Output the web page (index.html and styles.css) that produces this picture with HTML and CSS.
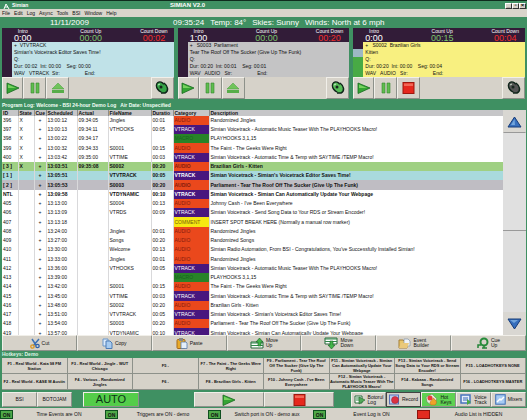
FILE: index.html
```
<!DOCTYPE html>
<html lang="en">
<head>
<meta charset="utf-8">
<title>Simian</title>
<link rel="stylesheet" href="styles.css">
</head>
<body>
<div class="app" id="app"></div>
<script src="app.js"></script>
</body>
</html>
```

FILE: styles.css
```
* { box-sizing: border-box; }
body { margin: 0; background: #3f9062; font: 5px/7px "Liberation Sans", sans-serif; color: #111; }
button { font: inherit; color: inherit; margin: 0; padding: 0; border: 1px solid; border-color: #f1efe9 #8d918a #8d918a #f1efe9; background: #d6d2c9; display: flex; align-items: center; justify-content: center; gap: 2px; min-width: 0; }
svg { display: block; flex: none; }
p, h1, h2 { margin: 0; font-size: inherit; font-weight: inherit; }
.app { min-height: 100vh; display: flex; flex-direction: column; }

.title { display: grid; grid-template-columns: 167px 1fr auto; align-items: center; height: 9px; padding: 1px 1px 0 3px; border-top: 1px solid #0f2c1d; color: #fff; font-size: 6px; font-weight: bold; }
.brand { display: flex; gap: 2px; align-items: center; font-size: 5px; }
.window-buttons { display: flex; justify-content: flex-end; }
.window-buttons button { width: 7px; height: 6px; border-color: #fff #333 #333 #fff; color: #000; }
.menu { display: flex; align-items: center; gap: 4px; height: 8px; padding: 0 2px; background: #d9d5cb; }
.menu a { color: inherit; text-decoration: none; }
.info { display: flex; align-items: center; height: 11px; padding-left: 50px; color: #fff; font-size: 8px; line-height: 10px; white-space: pre; }
.info .date { flex: 0 0 123px; }
.info .weather { display: flex; gap: 6px; }

.decks { display: grid; grid-template-columns: repeat(3, 1fr); gap: 4px; padding: 0 2px; }
.counters { display: grid; grid-template-columns: 1fr 1fr 1fr; height: 14px; padding: 1px 6px 0 12px; background: #321c38; color: #fff; }
.counters div { display: flex; flex-direction: column; line-height: 5px; text-align: center; justify-self: start; }
.counters b { font: 9px/8px "Liberation Sans", sans-serif; }
.counters .up { justify-self: center; }
.counters .down { justify-self: end; }
.up b { color: #7bc46c; }
.down b { color: #f02d2a; }
.now { display: flex; height: 35px; }
.meter { flex: 0 0 10px; background: #321c38; }
.meter.live { background: linear-gradient(#321c38 7px, #9db8c4 7px 15px, #48aa45 15px); }
.details { flex: 1; padding-left: 2px; white-space: pre; overflow: hidden; }
.blue .details { background: #c0e2e8; }
.gray .details { background: #c4c4c5; }
.yellow .details { background: #f8f080; }
.deck-buttons { display: grid; grid-template-columns: 21px 23px 23px 1fr 23px; height: 22px; background: #d6d2c9; }

.log { padding: 3px 0 0 2px; }
.log h2 { color: #f2fff5; font-weight: bold; height: 8px; line-height: 7px; white-space: pre; }
.log-body { display: grid; grid-template-columns: 1fr 23px; height: 225px; padding-right: 1px; }
.log-view { overflow: hidden; background: #fff; }
table { width: 100%; table-layout: fixed; border-collapse: collapse; }
th, td { padding: 0 1px; text-align: left; white-space: nowrap; overflow: hidden; height: 9px; line-height: 7px; border-right: 1px solid #d9d9db; }
tr:nth-child(4n) td { height: 10px; }
thead th { height: 6px; line-height: 6px; background: #c6c6c8; border-right-color: #8c8c8c; }
td:nth-child(3) { text-align: center; }
th:last-child, td:last-child { border-right: 0; }
.c-id { width: 16px; } .c-state { width: 16px; } .c-cue { width: 12px; } .c-time { width: 31px; }
.c-file { width: 43px; } .c-duration { width: 22px; } .c-category { width: 36px; }
.AUDIO { background: #ea481c; color: #861b0c; }
.VTRACK { background: #48177e; color: #fff; }
.MACRO { background: #288328; color: #176320; }
.COMMENT { background: #f6e911; color: #75620c; }
.playing, .cued, .queued, .next { font-weight: bold; }
.playing { background: #9fd083; }
.cued { background: #a9dadd; }
.queued { background: #bfbdc3; }
.scroll { display: flex; flex-direction: column; background: #dedede; }
.scroll button { height: 23px; border-color: #d9d7d2 #d9d7d2 #999 #d9d7d2; background: #d9d7d2; }
.thumb { height: 98px; border-bottom: 1px solid #999; background: #e0e0e0; }
.scroll .scroll-down { margin-top: auto; border-color: #d9d7d2; }

.tools { display: grid; grid-template-columns: repeat(7, 1fr); height: 16px; padding: 0 1px 0 2px; }
.tools button, .modes button { text-align: left; line-height: 5px; }
.hotkeys { padding: 0 1px 0 2px; }
.hotkeys h2 { height: 7px; line-height: 7px; color: #dff5e4; font-weight: bold; }
.keys { display: grid; grid-template-columns: repeat(8, 1fr); grid-auto-rows: 16px; }
.keys button { font-size: 4px; font-weight: bold; line-height: 5px; text-align: center; border-width: 0 1px 1px 0; }
.transport { display: flex; height: 17px; padding: 2px 1px 0 2px; }
.source { flex: 0 0 35px; }
.transport .auto { flex: 0 0 56px; margin: 0 55px 0 11px; background: #54cd4a; font-size: 11px; line-height: 13px; color: #0b3515; }
.transport .wide { flex: 0 0 70px; }
.modes { flex: 1; margin-left: 17px; display: grid; grid-template-columns: repeat(5, 1fr); }
.modes .on { background: #5fd252; }
.modes .focus { border-color: #444; }
.status { flex: 1; display: grid; grid-template-columns: 105px 103px 105px 104px 1fr; align-items: center; margin-top: 1px; background: #d6d2c9; }
.status div { display: flex; align-items: center; }
.status span { flex: 1; text-align: center; }
.lamp { flex: 0 0 13px; height: 9px; line-height: 8px; text-align: center; border: 1px solid #0f4f20; background: #4fa848; font-weight: bold; font-style: normal; }
.lamp.off { background: #e22b20; border-color: #8c140e; }
```

FILE: app.js
```
const svg = (w, h, box, body) => `<svg width="${w}" height="${h}" viewBox="0 0 ${box}" aria-hidden="true">${body}</svg>`;
const icons = {
  play: svg(14, 12, '14 12', '<path d="M1 1 13 6 1 11.500Z" fill="#35a533" stroke="#176b20" stroke-width=".8"/><path d="M2 2.500 10 6H2Z" fill="#76d25f"/>'),
  pause: svg(10, 12, '10 12', '<path d="M1 1H4V11H1ZM6 1H9V11H6Z" fill="#5fbd4e" stroke="#36862f" stroke-width=".6"/>'),
  eject: svg(14, 12, '14 12', '<path d="M7 1 13 7H1Z" fill="#70c45b" stroke="#439a3b" stroke-width=".5"/><path d="M1 8H13V11H1Z" fill="#57ad49"/>'),
  stop: svg(13, 12, '13 12', '<rect x="1" y=".5" width="11" height="11" fill="#e5281d" stroke="#9d180f"/><path d="M2 1.500H11V4H2Z" fill="#f26856"/>'),
  up: svg(15, 12, '15 12', '<path d="M7.500 1 14 11H1Z" fill="#376fbd" stroke="#173c78"/><path d="M7.500 3 4 9H8Z" fill="#72a5dc"/>'),
  down: svg(15, 12, '15 12', '<path d="M7.500 11 14 1H1Z" fill="#376fbd" stroke="#173c78"/><path d="M3 2H11L7 5Z" fill="#72a5dc"/>'),
  logo: svg(7, 6, '7 6', '<path d="M1 6 3 1 6 6M2 4H5" fill="none" stroke="#fff"/>'),
  cut: svg(10, 11, '10 11', '<path d="M2 1 6 7M9 1 3 8" stroke="#3c70b4" stroke-width="1.500"/><circle cx="2.500" cy="8.500" r="1.700" fill="none" stroke="#de9922" stroke-width="1.300"/><circle cx="7.500" cy="8" r="1.700" fill="none" stroke="#2d60aa" stroke-width="1.300"/>'),
  copy: svg(11, 11, '11 11', '<path d="M1 1H6V8H1Z" fill="#dceafa" stroke="#6a96c8"/><path d="M4 3H8L10 5V10.500H4Z" fill="#a7cbf0" stroke="#4d7db5"/>'),
  paste: svg(12, 11, '12 11', '<rect x="1" y="1.500" width="8" height="9" rx="1" fill="#e8aa2a" stroke="#a66b19"/><path d="M3 0H7V3H3Z" fill="#888"/><path d="M5 4H10L11 5V10.500H5Z" fill="#e4effa" stroke="#587ba7" stroke-width=".8"/>'),
  moveUp: svg(14, 11, '14 11', '<path d="M1 4H13V10H1Z" fill="#fff" stroke="#27693b"/><path d="M1 5H13M1 7.500H13" stroke="#31884b"/><path d="M8 8V4H6L9.500 0 13 4H11V8Z" fill="#43b54a" stroke="#175e25" stroke-width=".6"/>'),
  moveDown: svg(14, 12, '14 12', '<path d="M1 1H13V7H1Z" fill="#fff" stroke="#27693b"/><path d="M1 2H13M1 4.500H13" stroke="#31884b"/><path d="M6 4V8H4L7.500 12 11 8H9V4Z" fill="#43b54a" stroke="#175e25" stroke-width=".6"/>'),
  folder: svg(13, 11, '13 11', '<path d="M1 2H5L6 3H9V10H1Z" fill="#e7c66d" stroke="#a57e37"/><path d="M6 1H10L12 3V8H6Z" fill="#eef3f8" stroke="#8194a8" stroke-width=".7"/><path d="M1 10 3 5H11L9 10Z" fill="#eac97b"/>'),
  cue: svg(12, 12, '12 12', '<circle cx="7" cy="5" r="3.500" fill="none" stroke="#268b3a" stroke-width="2"/><path d="M1 11V8H4M5 11H10M7 8V11" fill="none" stroke="#248437" stroke-width="1.500"/>'),
  log: svg(12, 11, '12 11', '<path d="M1 2H8V9H1Z" fill="#fff" stroke="#286e3c"/><path d="M2 4H7M2 6H7" stroke="#348e4c"/><path d="M5 3V10L11 6Z" fill="#52aa57" stroke="#22672d" stroke-width=".6"/>'),
  record: svg(11, 11, '11 11', '<rect x=".5" y="1" width="9" height="9" fill="#b8ceef" stroke="#5671b8"/><circle cx="6" cy="6" r="3.500" fill="#dc3242" stroke="#9b1c2c" stroke-width=".5"/>'),
  fire: svg(13, 12, '13 12', '<path d="M1 3 7 0 12 5 6 11 2 8Z" fill="#e2ebd9" stroke="#69835c" stroke-width=".6"/><circle cx="5" cy="4" r="2.500" fill="#e63b38"/><path d="M6 11C3 7 8 7 8 4 11 6 13 8 10 11Z" fill="#eea329" stroke="#b86421" stroke-width=".5"/>'),
  voice: svg(12, 11, '12 11', '<rect x="1" y="1" width="9" height="8" fill="#e7eefb" stroke="#4774bd" stroke-width="1.500"/><path d="M3 4H8M3 6H8" stroke="#3969b8"/><path d="M7 8V5L11 8 7 11Z" fill="#48aa45"/>'),
  mixer: svg(11, 11, '11 11', '<rect x=".7" y=".7" width="9.500" height="9.500" fill="#a6caf2" stroke="#3d6eb6"/><path d="M2 8 5 5 6 6 9 3" fill="none" stroke="#fff" stroke-width="1.500"/>')
};
const speaker = c => svg(14, 14, '14 14', `<ellipse cx="6" cy="6" rx="4" ry="5.500" transform="rotate(-35 6 6)" fill="${c}" stroke="#10251a" stroke-width="1.500"/><path d="M9 2C13 5 14 10 10 12L6 12" fill="${c}" stroke="#10251a" stroke-width="1.500"/><circle cx="6" cy="6" r="1.500" fill="#17271d"/><path d="M3 4 5 3" stroke="#c9e4ca"/>`);
const button = (icon, label, cls = '') => `<button class="${cls}" aria-label="${label}">${icon}</button>`;

const decks = [
  ['blue', '0:00', '00:00', '00:02', '+  VTVTRACK', "Simian's Voicetrack Editor Saves Time!", 'Dur: 00:02  Int: 00:00    Seg: 00:00', 'WAV   VTRACK  Str:                  End:', '#36a447'],
  ['gray', '1:00', '00:00', '00:20', '+   S0003  Parliament', 'Tear The Roof Off The Sucker (Give Up The Funk)', 'Dur: 00:20  Int: 00:01    Seg: 00:01', 'WAV   AUDIO   Str:                  End:', '#58bd58'],
  ['yellow', '0:00', '00:15', '00:04', '+   S0002  Brazilian Girls', 'Kitten', 'Dur: 00:20  Int: 00:00    Seg: 00:04', 'WAV   AUDIO   Str:                  End:', '#555']
].map(([color, intro, up, down, name, title, times, kind, tint]) => {
  const live = color === 'yellow';
  return `<section class="${color}">
    <div class="counters"><div>Intro<b>${intro}</b></div><div class="up">Count Up<b>${up}</b></div><div class="down">Count Down<b>${down}</b></div></div>
    <div class="now"><div class="meter ${live ? 'live' : ''}"></div><div class="details"><p>${name}</p><p>${title}</p><p>Q:</p><p>${times}</p><p>${kind}</p></div></div>
    <div class="deck-buttons">${button(icons.play, 'Play')}${button(icons.pause, 'Pause')}${live ? button(icons.stop, 'Stop') : button(icons.eject, 'Eject')}<span></span>${button(speaker(tint), 'Monitor')}</div>
  </section>`;
}).join('');

const teaser = 'Simian Voicetrack - Automatic Music Teaser With The PLAYHOOKS Macro!';
const temps = 'Simian Voicetrack - Automatic Time & Temp with SAYTIME /TEMP Macro!';
const rows = [
  ['396', 'X', '13:00:12', '09:34:05', 'Jingles', '00:01', 'AUDIO', 'Randomized Jingles'],
  ['397', 'X', '13:00:13', '09:34:11', 'VTHOOKS', '00:05', 'VTRACK', teaser],
  ['398', 'X', '13:00:22', '09:34:17', '', '', 'MACRO', 'PLAYHOOKS 3,1,15'],
  ['399', 'X', '13:00:32', '09:34:33', 'S0001', '00:15', 'AUDIO', 'The Faint - The Geeks Were Right'],
  ['400', 'X', '13:03:42', '09:35:00', 'VTTIME', '00:03', 'VTRACK', temps],
  ['[ 3 ]', 'X', '13:03:51', '09:35:08', 'S0002', '00:20', 'AUDIO', 'Brazilian Girls - Kitten', 'playing'],
  ['[ 1 ]', '', '13:05:51', '', 'VTVTRACK', '00:05', 'VTRACK', "Simian Voicetrack - Simian's Voicetrack Editor Saves Time!", 'cued'],
  ['[ 2 ]', '', '13:05:53', '', 'S0003', '00:20', 'AUDIO', 'Parliament - Tear The Roof Off The Sucker (Give Up The Funk)', 'queued'],
  ['NTL', '', '13:09:58', '', 'VTDYNAMIC', '00:10', 'VTRACK', 'Simian Voicetrack - Simian Can Automatically Update Your Webpage', 'next'],
  ['405', '', '13:13:00', '', 'S0004', '00:13', 'AUDIO', "Johnny Cash - I've Been Everywhere"],
  ['406', '', '13:13:09', '', 'VTRDS', '00:09', 'VTRACK', 'Simian Voicetrack - Send Song Data to Your RDS or Stream Encoder!'],
  ['407', '', '13:13:18', '', '', '', 'COMMENT', 'INSERT SPOT BREAK HERE (Normally a manual row marker)'],
  ['408', '', '13:24:00', '', 'Jingles', '00:01', 'AUDIO', 'Randomized Jingles'],
  ['409', '', '13:27:00', '', 'Songs', '00:20', 'AUDIO', 'Randomized Songs'],
  ['410', '', '13:30:00', '', 'Welcome', '00:13', 'AUDIO', "Simian Radio Automation, From BSI - Congratulations, You've Successfully Installed Simian!"],
  ['411', '', '13:33:00', '', 'Jingles', '00:01', 'AUDIO', 'Randomized Jingles'],
  ['412', '', '13:36:00', '', 'VTHOOKS', '00:05', 'VTRACK', teaser],
  ['413', '', '13:39:00', '', '', '', 'MACRO', 'PLAYHOOKS 3,1,15'],
  ['414', '', '13:42:00', '', 'S0001', '00:15', 'AUDIO', 'The Faint - The Geeks Were Right'],
  ['415', '', '13:45:00', '', 'VTTIME', '00:03', 'VTRACK', temps],
  ['416', '', '13:48:00', '', 'S0002', '00:20', 'AUDIO', 'Brazilian Girls - Kitten'],
  ['417', '', '13:51:00', '', 'VTVTRACK', '00:05', 'VTRACK', "Simian Voicetrack - Simian's Voicetrack Editor Saves Time!"],
  ['418', '', '13:54:00', '', 'S0003', '00:20', 'AUDIO', 'Parliament - Tear The Roof Off The Sucker (Give Up The Funk)'],
  ['419', '', '13:57:00', '', 'VTDYNAMIC', '00:10', 'VTRACK', 'Simian Voicetrack - Simian Can Automatically Update Your Webpage']
].map(([id, state, due, actual, file, length, category, text, cls = '']) =>
  `<tr class="${cls}"><td>${id}</td><td>${state}</td><td>+</td><td>${due}</td><td>${actual}</td><td>${file}</td><td>${length}</td><td class="${category}">${category}</td><td>${text}</td></tr>`).join('');

const cols = ['id', 'state', 'cue', 'time', 'time', 'file', 'duration', 'category', 'text'].map(c => `<col class="c-${c}">`).join('');
const heads = ['ID', 'State', 'Cue', 'Scheduled', 'Actual', 'FileName', 'Duratio', 'Category', 'Description'].map(h => `<th>${h}</th>`).join('');
const tools = [['cut', 'Cut'], ['copy', 'Copy'], ['paste', 'Paste'], ['moveUp', 'Move<br>Up'], ['moveDown', 'Move<br>Down'], ['folder', 'Event<br>Builder'], ['cue', 'Cue<br>Up']]
  .map(([i, t]) => `<button>${icons[i]}<span>${t}</span></button>`).join('');
const keys = ['F1 - Real World - Kata 98 FM Station', 'F3 - Real World - Jingle - WUT Chicago', 'F5 -', 'F7 - The Faint - The Geeks Were Right', 'F9 - Parliament - Tear The Roof Off The Sucker (Give Up The Funk)', 'F11 - Simian Voicetrack - Simian Can Automatically Update Your Webpage', 'F13 - Simian Voicetrack - Send Song Data to Your RDS or Stream Encoder!', 'F15 - LOADHOTKEYS NONE',
  'F2 - Real World - KASE M Austin', 'F4 - Various - Randomized Jingles', 'F6 -', 'F8 - Brazilian Girls - Kitten', "F10 - Johnny Cash - I've Been Everywhere", 'F12 - Simian Voicetrack - Automatic Music Teaser With The PLAYHOOKS Macro!', 'F14 - Kabaaa - Randomized Songs', 'F16 - LOADHOTKEYS MASTER']
  .map(k => `<button>${k}</button>`).join('');
const modes = [['log', 'Botorul<br>Log', ''], ['record', 'Record', 'focus'], ['fire', 'Hot<br>Keys', 'on'], ['voice', 'Voice<br>Track', ''], ['mixer', 'Mixers', '']]
  .map(([i, t, c]) => `<button class="${c}">${icons[i]}<span>${t}</span></button>`).join('');
const status = ['Time Events are ON', 'Triggers are ON - demo', 'Switch port is ON - demo aux', 'Event Log is ON', 'Audio List is HIDDEN']
  .map((t, i) => `<div><i class="lamp ${i === 4 ? 'off' : ''}">${i === 4 ? '' : 'ON'}</i><span>${t}</span></div>`).join('');

document.getElementById('app').innerHTML = `
  <header class="title"><span class="brand">${icons.logo}Simian</span><h1>SIMIAN V2.0</h1><div class="window-buttons"><button aria-label="Minimize">_</button><button aria-label="Restore">▫</button><button aria-label="Close">×</button></div></header>
  <nav class="menu">${['File', 'Edit', 'Log', 'Async', 'Tools', 'BSI', 'Window', 'Help'].map(m => `<a href="#">${m}</a>`).join('')}</nav>
  <div class="info"><span class="date">11/11/2009</span><div class="weather"><span>09:35:24</span><span>Temp: 84°</span><span>Skies: Sunny</span><span>Winds: North at 6 mph</span></div></div>
  <main class="decks">${decks}</main>
  <section class="log"><h2>Program Log: Welcome - BSI 24-hour Demo Log   Air Date: Unspecified</h2>
    <div class="log-body"><div class="log-view"><table><colgroup>${cols}</colgroup><thead><tr>${heads}</tr></thead><tbody>${rows}</tbody></table></div>
    <div class="scroll">${button(icons.up, 'Scroll up')}<div class="thumb"></div>${button(icons.down, 'Scroll down', 'scroll-down')}</div></div></section>
  <div class="tools">${tools}</div>
  <section class="hotkeys"><h2>Hotkeys: Demo</h2><div class="keys">${keys}</div></section>
  <div class="transport"><button class="source">BSI</button><button class="source">BOTOJAM</button><button class="auto">AUTO</button>${button(icons.play, 'Start', 'wide')}${button(icons.stop, 'Stop', 'wide')}<div class="modes">${modes}</div></div>
  <footer class="status">${status}</footer>`;
```
